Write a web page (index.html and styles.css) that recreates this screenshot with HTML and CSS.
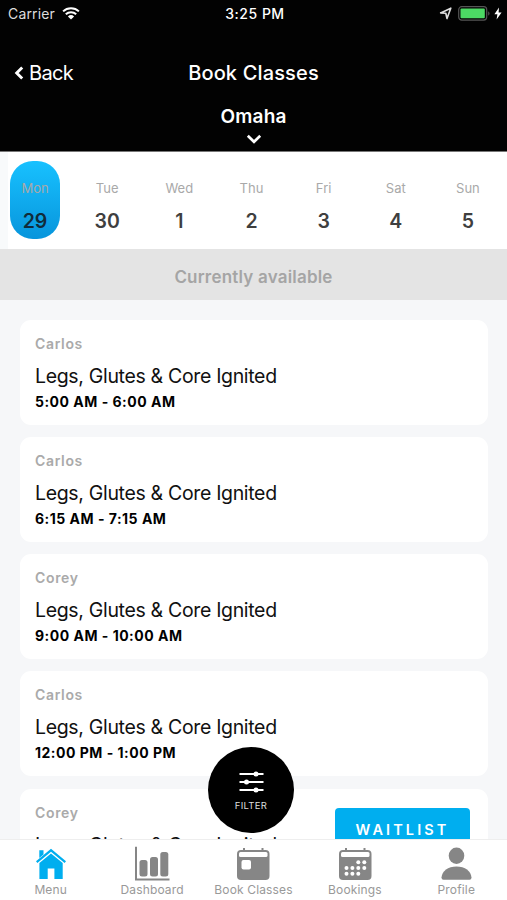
FILE: index.html
```html
<!DOCTYPE html>
<html lang="en">
<head>
    <meta charset="UTF-8">
    <meta name="viewport" content="width=device-width, initial-scale=1.0">
    <title>Book Classes</title>
    <link rel="stylesheet" href="styles.css">
</head>
<body>

<div class="app">
    <header class="header">
        <div class="status-bar">
            <div class="status-left">
                <span class="carrier">Carrier</span>
                <svg class="wifi" width="18" height="13" viewBox="0 0 18 13">
                    <path d="M1.1 4.4a11.4 11.4 0 0 1 15.8 0M3.8 7.3a7.5 7.5 0 0 1 10.4 0" fill="none" stroke="#fff" stroke-width="2"/>
                    <path d="M5.9 9.4a4.5 4.5 0 0 1 6.2 0L9 12.6z" fill="#fff"/>
                </svg>
            </div>
            <span class="clock">3:25 PM</span>
            <div class="status-right">
                <svg width="13" height="13" viewBox="0 0 13 13">
                    <path d="M1.6 5.9 11.8 1.2 8 11.6 6.8 6.300z" fill="none" stroke="#ddd" stroke-width="1.6" stroke-linejoin="round"/>
                </svg>
                <svg class="battery" width="32" height="15" viewBox="0 0 32 15">
                    <rect x=".7" y=".7" width="28" height="13.4" rx="3" fill="none" stroke="#555" stroke-width="1.2"/>
                    <rect x="2.5" y="2.5" width="24.3" height="9.7" rx="1" fill="#4cd964"/>
                    <path d="M30.2 5.2c1.8.8 1.8 3.7 0 4.5z" fill="#555"/>
                </svg>
                <svg width="8" height="13" viewBox="0 0 8 13">
                    <path d="M5 .5.4 7.3h3L2.6 12.5 7.6 5.4h-3z" fill="#fff"/>
                </svg>
            </div>
        </div>
        <div class="nav-bar">
            <a class="back">
                <svg width="11" height="14" viewBox="0 0 11 14">
                    <path d="M9.200 1.500 3.700 7l5.500 5.500" fill="none" stroke="#fff" stroke-width="2.9"/>
                </svg>
                <span>Back</span>
            </a>
            <h1 class="title">Book Classes</h1>
        </div>
        <div class="location">
            <span class="location-name">Omaha</span>
            <svg width="16" height="10" viewBox="0 0 16 10">
                <path d="M1.8 1.8 8 7.8l6.2-6" fill="none" stroke="#fff" stroke-width="2.7"/>
            </svg>
        </div>
    </header>

    <div class="days">
        <div class="day active"><span class="day-name">Mon</span><span class="day-num">29</span></div>
        <div class="day"><span class="day-name">Tue</span><span class="day-num">30</span></div>
        <div class="day"><span class="day-name">Wed</span><span class="day-num">1</span></div>
        <div class="day"><span class="day-name">Thu</span><span class="day-num">2</span></div>
        <div class="day"><span class="day-name">Fri</span><span class="day-num">3</span></div>
        <div class="day"><span class="day-name">Sat</span><span class="day-num">4</span></div>
        <div class="day"><span class="day-name">Sun</span><span class="day-num">5</span></div>
    </div>

    <div class="section-title">Currently available</div>

    <main class="classes">
        <div class="card">
            <div class="coach">Carlos</div>
            <div class="class-name">Legs, Glutes &amp; Core Ignited</div>
            <div class="time">5:00 AM - 6:00 AM</div>
        </div>
        <div class="card">
            <div class="coach">Carlos</div>
            <div class="class-name">Legs, Glutes &amp; Core Ignited</div>
            <div class="time">6:15 AM - 7:15 AM</div>
        </div>
        <div class="card">
            <div class="coach">Corey</div>
            <div class="class-name">Legs, Glutes &amp; Core Ignited</div>
            <div class="time">9:00 AM - 10:00 AM</div>
        </div>
        <div class="card">
            <div class="coach">Carlos</div>
            <div class="class-name">Legs, Glutes &amp; Core Ignited</div>
            <div class="time">12:00 PM - 1:00 PM</div>
        </div>
        <div class="card with-button">
            <div>
                <div class="coach">Corey</div>
                <div class="class-name">Legs, Glutes &amp; Core Ignited</div>
            </div>
            <button class="waitlist">WAITLIST</button>
        </div>
    </main>

    <!-- Floating filter button -->
    <button class="filter">
        <svg width="25" height="22" viewBox="0 0 25 22">
            <path d="M.5 3h24M.5 11h24M.5 19h24" stroke="#fff" stroke-width="2"/>
            <circle cx="17" cy="3" r="2.5" fill="#fff"/>
            <circle cx="7.5" cy="11" r="2.5" fill="#fff"/>
            <circle cx="17" cy="19" r="2.5" fill="#fff"/>
        </svg>
        <span>FILTER</span>
    </button>

    <nav class="tabs">
        <a class="tab">
            <svg width="36" height="36" viewBox="0 0 36 36" fill="#00aeef">
                <path d="M6.3 4.2h4.2v4.2L6.3 12z"/>
                <path d="M18 2.8 33 15.3l-1.4 1.7L18 5.7 4.4 17 3 15.3z"/>
                <path d="M18 7.4 29.7 17.1V33h-8.3V22.4h-6.7V33H6.4V17.1z"/>
            </svg>
            <span>Menu</span>
        </a>
        <a class="tab">
            <svg width="36" height="36" viewBox="0 0 36 36" fill="#868686">
                <path d="M2 .8v32.7h33.5" fill="none" stroke="#868686" stroke-width="2"/>
                <rect x="5.5" y="14" width="8" height="16.5" rx="2.5"/>
                <rect x="16" y="11" width="8" height="19.5" rx="2.5"/>
                <rect x="26.3" y="6" width="8" height="24.5" rx="2.5"/>
            </svg>
            <span>Dashboard</span>
        </a>
        <a class="tab">
            <svg width="36" height="36" viewBox="0 0 36 36" fill="#868686">
                <path d="M9 2v4M27.5 2v4" stroke="#868686" stroke-width="2"/>
                <rect x="2" y="4" width="32.5" height="30" rx="4"/>
                <rect x="4" y="6" width="28.5" height="5" rx="1.5" fill="#fff"/>
                <rect x="6.5" y="14" width="9.5" height="9.5" rx="2" fill="#fff"/>
            </svg>
            <span>Book Classes</span>
        </a>
        <a class="tab">
            <svg width="36" height="36" viewBox="0 0 36 36" fill="#868686">
                <path d="M9 2v4M27.5 2v4" stroke="#868686" stroke-width="2"/>
                <rect x="2" y="4" width="32.5" height="30" rx="4"/>
                <rect x="4" y="6" width="28.5" height="5" rx="1.5" fill="#fff"/>
                <g fill="#fff">
                    <circle cx="21.3" cy="16.2" r="2"/><circle cx="27.3" cy="16.2" r="2"/>
                    <circle cx="9.5" cy="22" r="2"/><circle cx="15.4" cy="22" r="2"/>
                    <circle cx="21.3" cy="22" r="2"/><circle cx="27.3" cy="22" r="2"/>
                    <circle cx="9.5" cy="27.8" r="2"/><circle cx="15.4" cy="27.8" r="2"/><circle cx="21.3" cy="27.8" r="2"/>
                </g>
            </svg>
            <span>Bookings</span>
        </a>
        <a class="tab">
            <svg width="36" height="36" viewBox="0 0 36 36" fill="#868686">
                <ellipse cx="18.5" cy="9.7" rx="7.8" ry="8.2"/>
                <path d="M3.5 31.5C4 25 10 20.5 18.5 20.5S33 25 33.5 31.5q0 2.3-2 2.3h-26q-2 0-2-2.3z"/>
            </svg>
            <span>Profile</span>
        </a>
    </nav>
</div>

</body>
</html>
```
FILE: styles.css
```css
* {
    box-sizing: border-box;
}
body {
    margin: 0;
    font-family: Inter, "Liberation Sans", sans-serif;
    background-color: #f6f7f9;
}
button {
    border: none;
    padding: 0;
    font-family: inherit;
    cursor: pointer;
}
svg {
    display: block;
}
.app {
    position: relative;
    display: flex;
    flex-direction: column;
    height: 900px;
    overflow: hidden;
}

/* Header */
.header {
    flex: none;
    height: 152px;
    background-color: #020202;
    border-bottom: 1px solid #777;
    color: #fff;
}
.status-bar {
    display: grid;
    grid-template-columns: 1fr auto 1fr;
    align-items: center;
    height: 27px;
    padding: 0 5px 0 8px;
    font-size: 14px;
}
.status-left, .status-right {
    display: flex;
    align-items: center;
}
.status-left {
    gap: 7px;
}
.status-right {
    justify-content: flex-end;
    gap: 6px;
}
.battery {
    margin-right: -2px;
}
.carrier {
    color: #ddd;
    letter-spacing: 0.15px;
}
.clock {
    font-weight: 500;
    letter-spacing: 0.5px;
}
.nav-bar {
    display: grid;
    grid-template-columns: 1fr auto 1fr;
    align-items: center;
    height: 32px;
    margin-top: 30px;
    padding: 0 13px;
}
.back {
    display: flex;
    align-items: center;
    gap: 5px;
    font-size: 20px;
    letter-spacing: -0.7px;
}
.title {
    margin: 0;
    font-size: 20px;
    font-weight: 500;
    letter-spacing: 0.15px;
    line-height: 32px;
}
.location {
    display: flex;
    flex-direction: column;
    align-items: center;
    padding-top: 16px;
}
.location-name {
    font-size: 19px;
    font-weight: 600;
    letter-spacing: 0.2px;
    line-height: 24px;
    height: 29px;
}

/* Day picker */
.days {
    flex: none;
    display: flex;
    justify-content: space-between;
    height: 97px;
    padding: 9px 14px 0 2px;
    background-color: #fff;
    border-left: 8px solid #f8fafb;
}
.day {
    display: flex;
    flex-direction: column;
    align-items: center;
    width: 50px;
    height: 78px;
    padding-top: 17px;
    border-radius: 23px;
}
.day.active {
    background: linear-gradient(#18c1ff, #0795dc);
}
.day-name {
    font-size: 13px;
    line-height: 20px;
    color: #a9a9a9;
}
.day-num {
    margin-top: 11px;
    font-size: 19.5px;
    font-weight: 600;
    line-height: 24px;
    color: #3f3f3f;
}
.active .day-num {
    color: #102c3b;
}
.section-title {
    flex: none;
    height: 51px;
    padding-top: 3px;
    background-color: #e4e4e4;
    color: #a5a5a5;
    font-size: 17px;
    font-weight: 600;
    letter-spacing: 0.2px;
    line-height: 50px;
    text-align: center;
}

/* Class list */
.classes {
    flex: 1;
    min-height: 0;
    display: flex;
    flex-direction: column;
    gap: 12.3px;
    padding: 19.5px 19px 0 20px;
    overflow: hidden;
}
.card {
    flex: none;
    height: 105px;
    padding: 14px 15px;
    border-radius: 11px;
    background-color: #fff;
}
.coach {
    font-size: 14px;
    font-weight: 600;
    line-height: 20px;
    letter-spacing: 0.65px;
    color: #aaa;
}
.class-name {
    margin-top: 9px;
    font-size: 19.5px;
    line-height: 26px;
    letter-spacing: -0.33px;
    color: #111;
    white-space: nowrap;
}
.time {
    margin-top: 3px;
    font-size: 14px;
    font-weight: 700;
    line-height: 20px;
    letter-spacing: 0.5px;
    color: #000;
}
.with-button {
    display: flex;
    justify-content: space-between;
}
.waitlist {
    width: 135px;
    height: 44px;
    margin: 5px 3px 0 0;
    border-radius: 4px;
    background-color: #00aeef;
    color: #fff;
    font-size: 14.5px;
    font-weight: 600;
    letter-spacing: 3.1px;
}

/* Sits over the class list */
.filter {
    position: absolute;
    left: 208px;
    top: 747px;
    display: flex;
    flex-direction: column;
    align-items: center;
    width: 86px;
    height: 86px;
    padding-top: 24px;
    border-radius: 50%;
    background-color: #000;
    color: #ddd;
    font-size: 9.5px;
    line-height: 12px;
    letter-spacing: 0.3px;
}
.filter span {
    margin-top: 7px;
}

/* Bottom tabs */
.tabs {
    flex: none;
    display: grid;
    grid-template-columns: repeat(5, 1fr);
    height: 61px;
    padding-top: 6px;
    border-top: 1px solid #eee;
    background-color: #fff;
}
.tab {
    display: flex;
    flex-direction: column;
    align-items: center;
    color: #999;
    font-size: 12px;
    line-height: 16px;
    letter-spacing: 0.15px;
}
.tab span {
    white-space: nowrap;
}
```
